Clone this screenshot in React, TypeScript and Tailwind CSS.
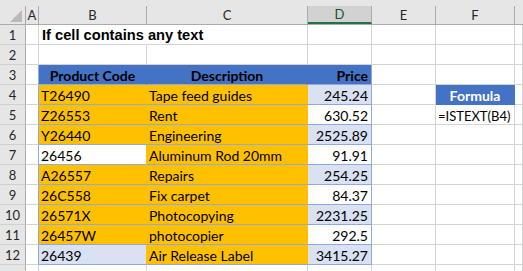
import type { ReactNode } from 'react'

const ORANGE = 'bg-[#ffc000]'
const LIGHT = 'bg-[#d9e1f2]'
const WHITE = 'bg-white'

type Item = {
  code: string
  desc: string
  price: string
  codeBg: string
  priceBg: string
}

const items: Item[] = [
  { code: 'T26490', desc: 'Tape feed guides', price: '245.24', codeBg: ORANGE, priceBg: LIGHT },
  { code: 'Z26553', desc: 'Rent', price: '630.52', codeBg: ORANGE, priceBg: WHITE },
  { code: 'Y26440', desc: 'Engineering', price: '2525.89', codeBg: ORANGE, priceBg: LIGHT },
  { code: '26456', desc: 'Aluminum Rod 20mm', price: '91.91', codeBg: WHITE, priceBg: WHITE },
  { code: 'A26557', desc: 'Repairs', price: '254.25', codeBg: ORANGE, priceBg: LIGHT },
  { code: '26C558', desc: 'Fix carpet', price: '84.37', codeBg: ORANGE, priceBg: WHITE },
  { code: '26571X', desc: 'Photocopying', price: '2231.25', codeBg: ORANGE, priceBg: LIGHT },
  { code: '26457W', desc: 'photocopier', price: '292.5', codeBg: ORANGE, priceBg: WHITE },
  { code: '26439', desc: 'Air Release Label', price: '3415.27', codeBg: LIGHT, priceBg: LIGHT },
]

const widths = ['w-[26px]', 'w-[13px]', 'w-[108px]', 'w-[161px]', 'w-[64px]', 'w-[64px]', 'w-[79px]', 'flex-1']

// one worksheet cell, borders sit on its right and bottom edge
function Cell({
  col,
  className = '',
  children,
}: {
  col: number
  className?: string
  children?: ReactNode
}) {
  return (
    <div
      className={`${widths[col]} shrink-0 h-full border-r border-b flex items-end overflow-hidden whitespace-nowrap pb-[1px] ${className}`}
    >
      {children}
    </div>
  )
}

function RowHead({ n }: { n?: number }) {
  return (
    <Cell col={0} className="bg-[#e6e6e6] border-b-[#d0d0d0] border-r-[#ababab] justify-center !items-center !pb-0 text-[13px] text-[#262626] pt-[1px]">
      {n}
    </Cell>
  )
}

function ColHead({ label, col, active }: { label: string; col: number; active?: boolean }) {
  return (
    <div className={`${widths[col]} shrink-0 h-full flex flex-col border-b border-[#ababab]`}>
      <div className="h-[6px]" />
      <div
        className={`flex-1 flex items-center justify-center border-r border-[#ababab] text-[13px] ${
          active ? 'bg-[#d2d2d2] border-b-2 border-b-[#217346] text-[#1d4d33]' : 'text-[#262626]'
        }`}
      >
        {label}
      </div>
    </div>
  )
}

function Row({ n, children }: { n?: number; children: ReactNode }) {
  return (
    <div className="flex h-[20px]">
      <RowHead n={n} />
      {children}
    </div>
  )
}

const grid = 'border-[#d4d4d4]'
const tb = 'border-b-[#8ea9db]'

export default function App() {
  return (
    <div className="w-[523px] h-[271px] bg-white overflow-hidden font-['Lato',sans-serif] text-[14px] text-black leading-none">
      <div className="flex h-[25px] bg-[#e6e6e6]">
        <div className="w-[26px] shrink-0 h-full border-b border-[#ababab] relative">
          <div className="absolute left-0 right-0 top-[6px] bottom-0 border-r border-[#ababab]" />
          <svg className="absolute left-0 top-0" width="26" height="25" viewBox="0 0 26 25">
            <polygon points="22,10 22,22 10,22" fill="#b9b9b9" />
          </svg>
        </div>
        <ColHead label="A" col={1} />
        <ColHead label="B" col={2} />
        <ColHead label="C" col={3} />
        <ColHead label="D" col={4} active />
        <ColHead label="E" col={5} />
        <ColHead label="F" col={6} />
        <div className="flex-1 h-full border-b border-[#ababab]" />
      </div>

      <Row n={1}>
        <Cell col={1} className={grid} />
        <Cell col={2} className="border-r-transparent border-b-[#d4d4d4] !overflow-visible pl-[3px]">
          <span className="font-['Liberation_Sans',Arial,sans-serif] font-bold text-[14.67px] relative z-10">
            If cell contains any text
          </span>
        </Cell>
        <Cell col={3} className={grid} />
        <Cell col={4} className={grid} />
        <Cell col={5} className={grid} />
        <Cell col={6} className={grid} />
        <Cell col={7} className={grid} />
      </Row>

      <Row n={2}>
        {[1, 2, 3, 4, 5, 6, 7].map((c) => (
          <Cell key={c} col={c} className={grid} />
        ))}
      </Row>

      <Row n={3}>
        <Cell col={1} className="border-r-[#8ea9db] border-b-[#d4d4d4]" />
        <Cell col={2} className={`bg-[#4472c4] border-r-[#4472c4] ${tb} justify-center font-bold`}>
          Product Code
        </Cell>
        <Cell col={3} className={`bg-[#4472c4] border-r-[#4472c4] ${tb} justify-center font-bold`}>
          Description
        </Cell>
        <Cell col={4} className={`bg-[#4472c4] border-r-[#8ea9db] ${tb} justify-end pr-[3px] font-bold`}>
          Price
        </Cell>
        <Cell col={5} className={grid} />
        <Cell col={6} className={grid} />
        <Cell col={7} className={grid} />
      </Row>

      {items.map((it, i) => (
        <Row key={it.code} n={i + 4}>
          <Cell col={1} className="border-r-[#8ea9db] border-b-[#d4d4d4]" />
          <Cell col={2} className={`${it.codeBg} border-r-[#ffc000] ${tb} pl-[2px]`}>
            {it.code}
          </Cell>
          <Cell col={3} className={`${ORANGE} border-r-[#ffc000] ${tb} pl-[2px]`}>
            {it.desc}
          </Cell>
          <Cell col={4} className={`${it.priceBg} border-r-[#8ea9db] ${tb} justify-end pr-[3px]`}>
            {it.price}
          </Cell>
          <Cell col={5} className={grid} />
          {i === 0 ? (
            <Cell col={6} className="bg-[#4472c4] border-[#4472c4] justify-center text-white font-bold">
              Formula
            </Cell>
          ) : i === 1 ? (
            <Cell col={6} className={`${grid} pl-[2px] !overflow-visible`}>
              <span className="text-[13px]">=ISTEXT(B4)</span>
            </Cell>
          ) : (
            <Cell col={6} className={grid} />
          )}
          <Cell col={7} className={grid} />
        </Row>
      ))}

      {/* row 13 is only partly in view, its number falls below the edge */}
      <Row>
        {[1, 2, 3, 4, 5, 6, 7].map((c) => (
          <Cell key={c} col={c} className={grid} />
        ))}
      </Row>
    </div>
  )
}
